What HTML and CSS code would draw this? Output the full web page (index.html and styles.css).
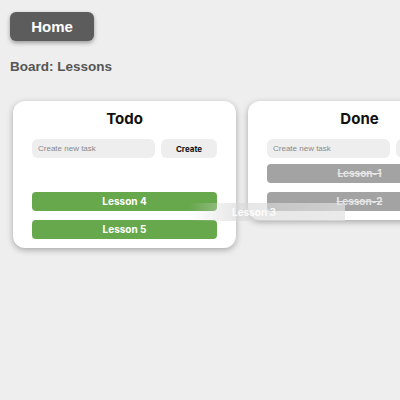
FILE: index.html
```html
<!DOCTYPE html>
<html>
<head>
<meta charset="utf-8">
<link rel="stylesheet" href="styles.css">
</head>
<body>
<div class="page">
  <button class="home">Home</button>
  <h2 class="board-title">Board: Lessons</h2>
  <div class="board">
    <div class="card">
      <h3 class="card-title">Todo</h3>
      <div class="create-row">
        <input class="task-input" placeholder="Create new task">
        <button class="create-btn">Create</button>
      </div>
      <div class="list">
        <div class="item todo placeholder">Lesson 3</div>
        <div class="item todo">Lesson 4</div>
        <div class="item todo">Lesson 5</div>
      </div>
    </div>
    <div class="card">
      <h3 class="card-title">Done</h3>
      <div class="create-row">
        <input class="task-input" placeholder="Create new task">
        <button class="create-btn">Create</button>
      </div>
      <div class="list">
        <div class="item done">Lesson-1</div>
        <div class="item done">Lesson-2</div>
      </div>
    </div>
  </div>
  <div class="ghost">Lesson 3</div>
</div>
</body>
</html>
```
FILE: styles.css
```css
html, body {
  margin: 0;
  padding: 0;
  background: #eeeeee;
  overflow: hidden;
}
.page {
  position: relative;
  display: flow-root;
  width: 400px;
  height: 400px;
  font-family: "Liberation Sans", Arial, sans-serif;
}
.home {
  display: block;
  margin: 12px 0 0 10px;
  width: 84px;
  height: 29px;
  border: none;
  border-radius: 6px;
  background: #5c5c5c;
  color: #fff;
  font-family: "Liberation Sans", Arial, sans-serif;
  font-weight: bold;
  font-size: 15px;
  box-shadow: 0 2px 4px rgba(0,0,0,0.35);
}
.board-title {
  margin: 18px 0 0 10px;
  font-size: 13.5px;
  line-height: 16px;
  color: #555;
  font-weight: bold;
}
.board {
  display: flex;
  gap: 12px;
  margin: 26px 0 0 13px;
  align-items: flex-start;
}
.card {
  flex: 0 0 223px;
  box-sizing: border-box;
  background: #fff;
  border-radius: 12px;
  padding: 8px 19px 9px;
  box-shadow: 0 2px 6px rgba(0,0,0,0.3);
}
.card-title {
  margin: 0 0 10px;
  text-align: center;
  font-family: Inter, "Liberation Sans", sans-serif;
  font-size: 15px;
  line-height: 20px;
  font-weight: bold;
  color: #111;
}
.create-row {
  display: flex;
  gap: 6px;
}
.task-input {
  flex: 0 0 123px;
  box-sizing: border-box;
  height: 19px;
  border: none;
  border-radius: 6px;
  background: #eeeeee;
  padding: 0 6px;
  font-family: "Liberation Sans", Arial, sans-serif;
  font-size: 8px;
  outline: none;
}
.task-input::placeholder {
  color: #8a8a8a;
}
.create-btn {
  flex: 0 0 56px;
  height: 19px;
  border: none;
  border-radius: 6px;
  background: #eeeeee;
  font-family: Inter, "Liberation Sans", sans-serif;
  font-weight: bold;
  font-size: 8px;
  color: #111;
  padding: 0;
}
.list {
  display: flex;
  flex-direction: column;
  gap: 9px;
  margin-top: 6px;
}
.item {
  height: 19px;
  line-height: 19px;
  border-radius: 4px;
  text-align: center;
  font-family: Inter, "Liberation Sans", sans-serif;
  font-weight: bold;
  font-size: 10px;
}
.todo {
  background: #68a84d;
  color: #fff;
}
.done {
  background: #a3a3a3;
  color: #e6e6e6;
  text-decoration: line-through;
}
.placeholder {
  visibility: hidden;
}
.ghost {
  position: absolute;
  left: 190px;
  top: 203px;
  width: 155px;
  height: 18px;
  line-height: 18px;
  box-sizing: border-box;
  padding-left: 42px;
  font-family: Inter, "Liberation Sans", sans-serif;
  font-weight: bold;
  font-size: 10px;
  color: rgba(255,255,255,0.9);
  background: linear-gradient(to right, rgba(225,225,225,0) 0%, rgba(215,215,215,0.6) 30%, rgba(225,225,225,0.7) 100%);
}
```
